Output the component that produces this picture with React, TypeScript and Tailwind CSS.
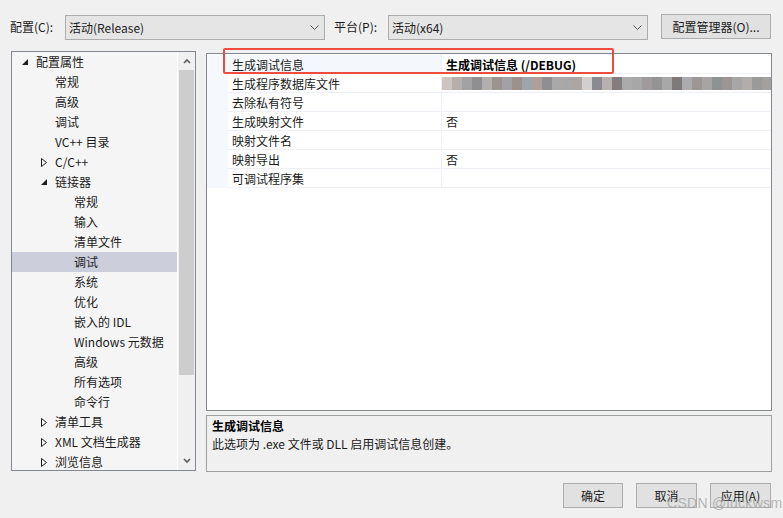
import React from "react";

type Node = { t: string; lvl: 0 | 1 | 2; exp?: boolean; col?: boolean; sel?: boolean };

const tree: Node[] = [
  { t: "配置属性", lvl: 0, exp: true },
  { t: "常规", lvl: 1 },
  { t: "高级", lvl: 1 },
  { t: "调试", lvl: 1 },
  { t: "VC++ 目录", lvl: 1 },
  { t: "C/C++", lvl: 1, col: true },
  { t: "链接器", lvl: 1, exp: true },
  { t: "常规", lvl: 2 },
  { t: "输入", lvl: 2 },
  { t: "清单文件", lvl: 2 },
  { t: "调试", lvl: 2, sel: true },
  { t: "系统", lvl: 2 },
  { t: "优化", lvl: 2 },
  { t: "嵌入的 IDL", lvl: 2 },
  { t: "Windows 元数据", lvl: 2 },
  { t: "高级", lvl: 2 },
  { t: "所有选项", lvl: 2 },
  { t: "命令行", lvl: 2 },
  { t: "清单工具", lvl: 1, col: true },
  { t: "XML 文档生成器", lvl: 1, col: true },
  { t: "浏览信息", lvl: 1, col: true },
];

const props: { n: string; v?: string; bold?: boolean; blur?: boolean }[] = [
  { n: "生成调试信息", v: "生成调试信息 (/DEBUG)", bold: true },
  { n: "生成程序数据库文件", blur: true },
  { n: "去除私有符号" },
  { n: "生成映射文件", v: "否" },
  { n: "映射文件名" },
  { n: "映射导出", v: "否" },
  { n: "可调试程序集" },
];

const blurColors = [
  "#cbc4c1", "#b5aeab", "#a2a2a5", "#8f8f92", "#b2b0ad", "#9a958f", "#a1a1a6", "#9d918e",
  "#9ea5aa", "#ae9f9b", "#8f8f93", "#aaa9a9", "#a8a8a8", "#aba6a2", "#d1d0cd", "#8b8a90",
  "#b6b1ae", "#857c80", "#acabab", "#a7a7a7", "#9f9a9b", "#949494", "#a8a8a8", "#7f7979",
  "#abaaae", "#9b9794", "#a6a5a4", "#8f9292", "#9b9595", "#a7a7a7", "#b0adab", "#9a9a9a", "#a3a0a0",
];

const padCls = ["pl-[8px]", "pl-[27px]", "pl-[46px]"];

function Chevron() {
  return (
    <svg width="9" height="5" viewBox="0 0 9 5">
      <polyline points="0.5,0.5 4.5,4.5 8.5,0.5" fill="none" stroke="#505050" strokeWidth="1" />
    </svg>
  );
}

function Dropdown({ text }: { text: string }) {
  return (
    <div className="w-[260px] h-[25px] mt-[1px] border border-[#adadad] bg-[#e5e5e5] flex items-center justify-between pl-[3px] pr-[5px]">
      <span>{text}</span>
      <Chevron />
    </div>
  );
}

function Tri({ exp, col }: { exp?: boolean; col?: boolean }) {
  if (exp)
    return (
      <svg width="6" height="6" viewBox="0 0 6 6" className="ml-[2px]">
        <polygon points="6,0 6,6 0,6" fill="#1e1e1e" />
      </svg>
    );
  if (col)
    return (
      <svg width="6" height="9" viewBox="0 0 6 9" className="ml-[2px]">
        <polygon points="0.5,0.5 5.5,4.5 0.5,8.5" fill="none" stroke="#1e1e1e" strokeWidth="1" />
      </svg>
    );
  return null;
}

export default function App() {
  return (
    <div className="w-[783px] h-[518px] bg-[#f0f0f0] relative overflow-hidden text-[12px] text-[#1b1b1b] font-['Noto_Sans_CJK_SC','Noto_Sans',sans-serif]">
      {/* top bar */}
      <div className="flex items-start pt-[14px] pl-[10px] h-[40px]">
        <span className="w-[55px] leading-[26px]">配置(C):</span>
        <Dropdown text="活动(Release)" />
        <span className="ml-[9px] w-[54px] leading-[26px]">平台(P):</span>
        <Dropdown text="活动(x64)" />
        <div className="ml-[13px] w-[110px] h-[25px] border border-[#adadad] bg-[#e1e1e1] flex items-center justify-center">
          配置管理器(O)...
        </div>
      </div>

      {/* main */}
      <div className="flex pl-[11px] mt-[11px]">
        {/* tree */}
        <div className="w-[185px] h-[420px] border border-[#828790] bg-[#f5f5f5] flex overflow-hidden">
          <div className="w-[165px] flex flex-col">
            {tree.map((n, i) => (
              <div
                key={i}
                className={`h-[20px] shrink-0 flex items-center ${padCls[n.lvl]} ${n.sel ? "bg-[#cccedb]" : ""}`}
              >
                <div className="w-[16px] flex items-center">
                  <Tri exp={n.exp} col={n.col} />
                </div>
                <span className="whitespace-nowrap">{n.t}</span>
              </div>
            ))}
          </div>
          <div className="w-[18px] border-l border-white bg-[#f0f0f0] flex flex-col">
            <div className="h-[18px] flex items-center justify-center">
              <svg width="8" height="6" viewBox="0 0 8 6">
                <polyline points="1,5 4,2 7,5" fill="none" stroke="#606060" strokeWidth="1.7" />
              </svg>
            </div>
            <div className="mx-[1px] h-[305px] bg-[#cdcdcd]" />
            <div className="flex-1" />
            <div className="h-[18px] flex items-center justify-center">
              <svg width="8" height="6" viewBox="0 0 8 6">
                <polyline points="1,1 4,4 7,1" fill="none" stroke="#606060" strokeWidth="1.7" />
              </svg>
            </div>
          </div>
        </div>

        {/* right column */}
        <div className="ml-[10px] mt-[2px] flex flex-col">
          <div className="w-[566px] h-[358px] border border-[#828790] bg-white flex flex-col pt-[1px]">
            {props.map((p, i) => (
              <div key={i} className="flex h-[19px] shrink-0">
                <div className="w-[21px] bg-[#f5f8fc]" />
                <div
                  className={`w-[214px] border-b border-r border-[#eef0f6] pl-[4px] pt-[2px] flex items-center whitespace-nowrap ${
                    i === 0 ? "bg-[#f4f7fc]" : ""
                  }`}
                >
                  {p.n}
                </div>
                <div className="flex-1 border-b border-[#eef0f6] pl-[4px] flex items-center whitespace-nowrap overflow-hidden">
                  {p.blur ? (
                    <div className="flex -ml-[4px] h-[13px]">
                      {blurColors.map((c, k) => (
                        <div key={k} className="w-[10px] h-[13px]" style={{ background: c }} />
                      ))}
                    </div>
                  ) : (
                    <span className={`pt-[2px] ${p.bold ? "font-bold text-black" : ""}`}>{p.v}</span>
                  )}
                </div>
              </div>
            ))}
          </div>
          <div className="w-[566px] h-[57px] mt-[4px] border border-[#a0a0a0] bg-[#f0f0f0] pl-[5px] pt-[1px]">
            <div className="leading-[18px] font-bold text-black">生成调试信息</div>
            <div className="leading-[18px]">此选项为 .exe 文件或 DLL 启用调试信息创建。</div>
          </div>
        </div>
      </div>

      {/* buttons */}
      <div className="flex justify-end pr-[12px] mt-[11px] gap-[13px]">
        <div className="w-[60px] h-[25px] border border-[#adadad] bg-[#e1e1e1] flex items-center justify-center">确定</div>
        <div className="w-[61px] h-[25px] border border-[#adadad] bg-[#e1e1e1] flex items-center justify-center">取消</div>
        <div className="w-[61px] h-[25px] border border-[#adadad] bg-[#e1e1e1] flex items-center justify-center">应用(A)</div>
      </div>

      {/* annotation box */}
      <div className="absolute left-[223px] top-[48px] w-[391px] h-[26px] border-2 border-[#ef4b3f] rounded-[2px]" />

      {/* watermark */}
      <div className="absolute left-[667px] top-[493px] text-[14px] leading-[20px] text-[#9a9a9a]/70 font-['Liberation_Sans',sans-serif] tracking-[0.3px]">
        CSDN @luckwsm
      </div>
    </div>
  );
}
